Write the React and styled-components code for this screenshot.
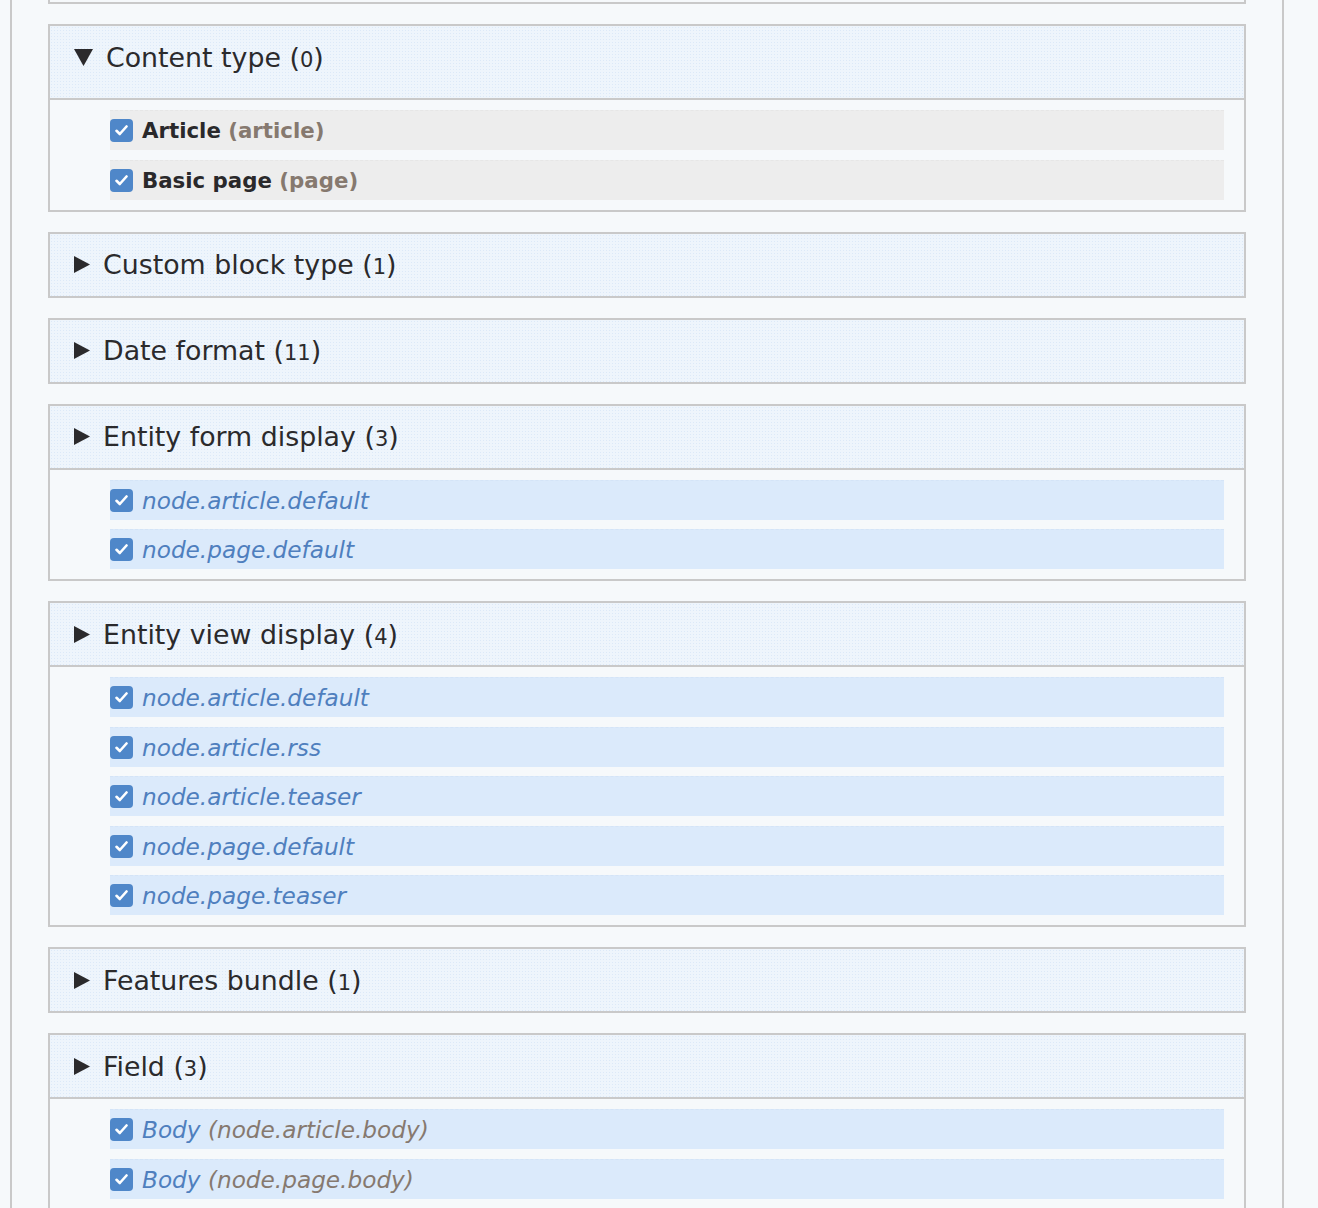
import React from 'react';
import styled, { createGlobalStyle } from 'styled-components';

const GlobalStyle = createGlobalStyle`
    html, body {
        margin: 0;
        padding: 0;
        background: #f6f9fb;
        font-family: "DejaVu Sans", "Open Sans", sans-serif;
        overflow: hidden;
    }
`;

const groups = [
    {
        title: 'Content type', count: '0', open: true, tall: true, kind: 'label',
        items: [
            { label: 'Article', machine: 'article' },
            { label: 'Basic page', machine: 'page' },
        ],
    },
    { title: 'Custom block type', count: '1' },
    { title: 'Date format', count: '11' },
    {
        title: 'Entity form display', count: '3', kind: 'config',
        items: [{ label: 'node.article.default' }, { label: 'node.page.default' }],
    },
    {
        title: 'Entity view display', count: '4', kind: 'config',
        items: [
            { label: 'node.article.default' },
            { label: 'node.article.rss' },
            { label: 'node.article.teaser' },
            { label: 'node.page.default' },
            { label: 'node.page.teaser' },
        ],
    },
    { title: 'Features bundle', count: '1' },
    {
        title: 'Field', count: '3', kind: 'config',
        items: [
            { label: 'Body', machine: 'node.article.body' },
            { label: 'Body', machine: 'node.page.body' },
        ],
    },
];

function Arrow({ open }) {
    // 펼쳐진 상태면 아래, 아니면 오른쪽 삼각형
    return open ? (
        <svg width="19" height="17" viewBox="0 0 19 17">
            <polygon points="0,0 19,0 9.5,17" fill="#2b2a2c" />
        </svg>
    ) : (
        <svg width="16" height="17" viewBox="0 0 16 17">
            <polygon points="0,0 16,8.5 0,17" fill="#2b2a2c" />
        </svg>
    );
}

function Check() {
    return (
        <Box>
            <svg width="13" height="11" viewBox="0 0 13 11">
                <polyline points="1.5,5.8 4.8,9 11.5,1.5" fill="none" stroke="#fff" strokeWidth="2.6" strokeLinecap="round" strokeLinejoin="round" />
            </svg>
        </Box>
    );
}

function App() {
    return (
        <>
            <GlobalStyle />
            <Frame>
                <Stub />
                {groups.map((g, idx) => (
                    <Group key={idx}>
                        <Summary $tall={g.tall}>
                            <Arrow open={g.open} />
                            <Title>
                                {g.title} <Count>(<Digits>{g.count}</Digits>)</Count>
                            </Title>
                        </Summary>
                        {g.items ? (
                            <Body>
                                {g.items.map((it, i) => (
                                    <Row key={i} $kind={g.kind}>
                                        <Check />
                                        {g.kind === 'label' ? (
                                            <Strong>
                                                {it.label} <Machine>({it.machine})</Machine>
                                            </Strong>
                                        ) : (
                                            <Config>
                                                {it.label}
                                                {it.machine ? <Machine> ({it.machine})</Machine> : ''}
                                            </Config>
                                        )}
                                    </Row>
                                ))}
                            </Body>
                        ) : ''}
                    </Group>
                ))}
            </Frame>
        </>
    );
}

const Frame = styled.div`
    box-sizing: border-box;
    width: 1274px;
    min-height: 1208px;
    margin-left: 10px;
    padding: 0 36px;
    border-left: 2px solid #c9c9c9;
    border-right: 2px solid #c9c9c9;
    background: #f6f9fb;
    display: flex;
    flex-direction: column;
    gap: 20px;
`;

const Stub = styled.div`
    height: 2px;
    border: 2px solid #c9c9c9;
    border-top: none;
`;

const Group = styled.div`
    border: 2px solid #c9c9c9;
    background: #f6f9fb;
`;

const Summary = styled.div`
    display: flex;
    align-items: center;
    gap: 13px;
    height: 62px;
    padding: 0 24px ${props => props.$tall ? '10px' : '0'};
    background-color: #eef5fc;
    background-image: radial-gradient(#dce9f8 0.8px, transparent 0.9px);
    background-size: 3px 3px;
`;

const Title = styled.span`
    font-size: 26.8px;
    color: #2b2a2c;
`;

const Count = styled.span`
    color: #2b2a2c;
`;

const Digits = styled.span`
    font-size: 21px;
`;

const Body = styled.div`
    display: flex;
    flex-direction: column;
    gap: 9.5px;
    padding: 10px 20px 10px 60px;
    border-top: 2px solid #c9c9c9;
`;

const Row = styled.div`
    display: flex;
    align-items: center;
    gap: 9px;
    height: 40px;
    background: ${props => props.$kind === 'label' ? '#ededed' : '#dbeafb'};
    border-top: 1px dashed ${props => props.$kind === 'label' ? '#e6e6e6' : '#d4e4f7'};
    box-sizing: border-box;
`;

const Box = styled.span`
    display: flex;
    align-items: center;
    justify-content: center;
    width: 23px;
    height: 23px;
    border-radius: 4px;
    background: #4f87c9;
    flex-shrink: 0;
`;

const Strong = styled.span`
    font-size: 21.3px;
    font-weight: bold;
    color: #2a292b;
`;

const Config = styled.span`
    font-size: 23.2px;
    font-style: italic;
    color: #4f7fbe;
`;

const Machine = styled.span`
    color: #86796f;
`;

export default App;
